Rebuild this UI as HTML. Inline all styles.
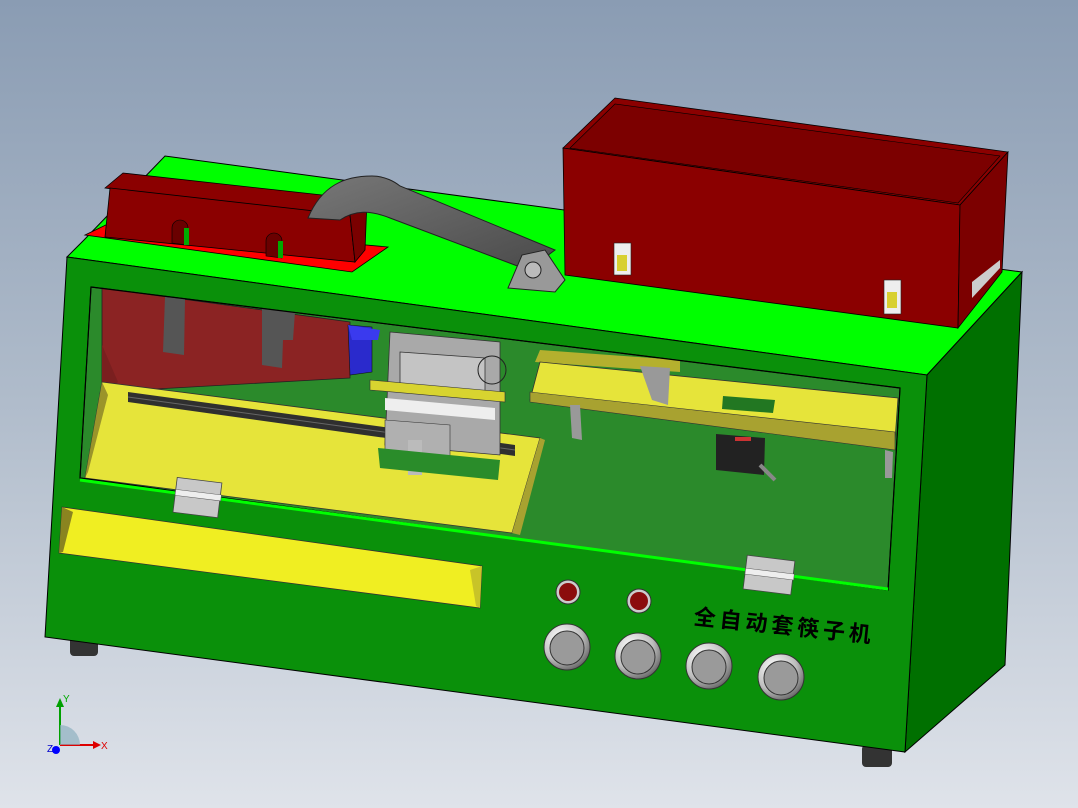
<!DOCTYPE html>
<html><head><meta charset="utf-8"><style>
html,body{margin:0;padding:0;width:1078px;height:808px;overflow:hidden}
svg{display:block}
</style></head><body>
<svg width="1078" height="808" viewBox="0 0 1078 808" xmlns="http://www.w3.org/2000/svg">
<defs>
<linearGradient id="bg" x1="0" y1="0" x2="0" y2="1">
<stop offset="0" stop-color="#8a9cb3"/><stop offset="0.5" stop-color="#b0bccb"/><stop offset="1" stop-color="#dfe3ea"/>
</linearGradient>
<radialGradient id="btn" cx="0.35" cy="0.3" r="0.8">
<stop offset="0" stop-color="#ffffff"/><stop offset="0.6" stop-color="#bdbdbd"/><stop offset="1" stop-color="#555"/>
</radialGradient>
<linearGradient id="arm" x1="0" y1="0" x2="1" y2="1">
<stop offset="0" stop-color="#777"/><stop offset="1" stop-color="#4a4a4a"/>
</linearGradient>
</defs>
<rect width="1078" height="808" fill="url(#bg)"/>

<!-- feet -->
<rect x="70" y="636" width="28" height="20" rx="4" fill="#333"/>
<rect x="862" y="745" width="30" height="22" rx="4" fill="#333"/>

<!-- top face -->
<polygon points="67,257 84,240 165,156 1022,272 927,375" fill="#00ff00" stroke="#000" stroke-width="1"/>
<!-- right side face -->
<polygon points="927,375 1022,272 1005,665 905,752" fill="#007000" stroke="#000" stroke-width="1"/>
<!-- front face -->
<polygon points="67,257 927,375 905,752 45,637" fill="#0a900a" stroke="#000" stroke-width="1"/>

<!-- window interior -->
<polygon points="91,287 900,388 888,590 80,478" fill="#2b8a2b" stroke="#000" stroke-width="1"/>
<!-- red back blocks -->
<polygon points="102,288 350,322 350,378 102,392" fill="#8b2323" stroke="#222" stroke-width="0.8"/>
<polygon points="165,297 185,299 184,355 163,352" fill="#555"/>
<polygon points="262,308 295,312 293,340 283,340 282,368 262,365" fill="#555"/>
<polygon points="102,345 118,382 102,395" fill="#7a1f1f"/>
<!-- yellow floor left -->
<polygon points="102,382 540,438 512,533 85,478" fill="#e6e43a" stroke="#333" stroke-width="0.8"/>
<polygon points="102,382 108,395 88,472 85,478" fill="#9a942a"/>
<polygon points="540,438 545,440 520,535 512,533" fill="#a8a230"/>
<!-- rail -->
<polygon points="128,392 515,445 515,456 128,402" fill="#2f2f2f"/>
<line x1="128" y1="397" x2="515" y2="450" stroke="#666" stroke-width="1"/>
<!-- right shelf -->
<polygon points="540,350 680,360 680,372 535,362" fill="#b4b02e"/>
<polygon points="540,362 898,398 895,440 530,400" fill="#e6e43a" stroke="#333" stroke-width="0.8"/>
<polygon points="530,392 895,432 895,450 530,402" fill="#a8a230" stroke="#333" stroke-width="0.6"/>
<polygon points="570,405 580,405 582,440 572,438" fill="#999"/>
<polygon points="885,450 893,452 892,478 885,478" fill="#999"/>
<polygon points="640,366 670,368 668,405 652,400" fill="#999"/>
<polygon points="723,396 775,400 773,413 722,409" fill="#227722"/>
<!-- sensor -->
<polygon points="716,434 765,438 764,475 716,470" fill="#222"/>
<line x1="760" y1="465" x2="775" y2="480" stroke="#888" stroke-width="4"/>
<rect x="735" y="437" width="16" height="4" fill="#c33"/>
<!-- mechanism -->
<polygon points="348,325 372,327 372,372 350,375" fill="#2a2acc" stroke="#111" stroke-width="0.6"/>
<polygon points="348,325 380,330 378,340 352,340" fill="#3a3aee"/>
<polygon points="390,332 500,342 500,455 385,445" fill="#a9a9a9" stroke="#333" stroke-width="0.8"/>
<polygon points="400,352 485,358 485,395 400,388" fill="#c4c4c4" stroke="#333" stroke-width="0.8"/>
<polygon points="370,380 505,392 505,402 370,390" fill="#d8d430" stroke="#333" stroke-width="0.6"/>
<polygon points="385,398 495,408 495,420 385,410" fill="#eee"/>
<polygon points="385,420 450,425 450,465 385,460" fill="#b0b0b0" stroke="#333" stroke-width="0.6"/>
<rect x="408" y="440" width="14" height="35" fill="#bbb"/>
<circle cx="492" cy="370" r="14" fill="none" stroke="#222" stroke-width="1"/>
<polygon points="378,448 500,460 498,480 380,468" fill="#2a8c2a"/>

<!-- window frame lines -->
<polygon points="91,287 900,388 888,590 80,478" fill="none" stroke="#000" stroke-width="1.2"/>
<line x1="80" y1="480" x2="888" y2="589" stroke="#00ff00" stroke-width="3"/>

<!-- hinges -->
<g>
<rect x="175" y="480" width="45" height="35" fill="#c8c8c8" stroke="#444" stroke-width="0.8" transform="rotate(7 197 497)"/>
<rect x="175" y="492" width="46" height="6" fill="#eee" stroke="#555" stroke-width="0.5" transform="rotate(7 197 497)"/>
<rect x="745" y="558" width="48" height="34" fill="#c8c8c8" stroke="#444" stroke-width="0.8" transform="rotate(7 769 575)"/>
<rect x="745" y="571" width="49" height="6" fill="#eee" stroke="#555" stroke-width="0.5" transform="rotate(7 769 575)"/>
</g>

<!-- yellow slot -->
<polygon points="62,507 482,566 480,608 59,553" fill="#f0ee22" stroke="#333" stroke-width="0.8"/>
<polygon points="62,507 73,512 63,552 59,553" fill="#8a8420"/>
<polygon points="470,570 482,566 480,608 476,606" fill="#c8c428"/>

<!-- lights -->
<circle cx="568" cy="592" r="12" fill="#ccc" stroke="#333" stroke-width="1"/>
<circle cx="568" cy="592" r="9" fill="#8b0c0c"/>
<circle cx="639" cy="601" r="12" fill="#ccc" stroke="#333" stroke-width="1"/>
<circle cx="639" cy="601" r="9" fill="#8b0c0c"/>
<!-- buttons -->
<g stroke="#333" stroke-width="1">
<circle cx="567" cy="647" r="23" fill="url(#btn)"/><circle cx="567" cy="648" r="17" fill="#9a9a9a"/>
<circle cx="638" cy="656" r="23" fill="url(#btn)"/><circle cx="638" cy="657" r="17" fill="#9a9a9a"/>
<circle cx="709" cy="666" r="23" fill="url(#btn)"/><circle cx="709" cy="667" r="17" fill="#9a9a9a"/>
<circle cx="781" cy="677" r="23" fill="url(#btn)"/><circle cx="781" cy="678" r="17" fill="#9a9a9a"/>
</g>
<text x="693" y="624" font-family="'Liberation Sans','Noto Sans CJK SC',sans-serif" font-size="22" font-weight="bold" fill="#000" letter-spacing="4" transform="rotate(6 693 624)">全自动套筷子机</text>

<!-- left red tray -->
<polygon points="85,235 112,222 388,247 352,272" fill="#ff0000" stroke="#000" stroke-width="0.8"/>
<polygon points="105,188 123,173 367,200 350,223" fill="#8b0000" stroke="#000" stroke-width="0.8"/>
<polygon points="110,188 350,215 355,262 105,237" fill="#8b0000" stroke="#000" stroke-width="0.8"/>
<polygon points="350,215 367,200 365,250 355,262" fill="#7a0000" stroke="#000" stroke-width="0.8"/>
<path d="M172,243 v-15 a8,8 0 0 1 16,0 v17 z" fill="#6a0000" stroke="#000" stroke-width="0.6"/>
<rect x="184" y="228" width="5" height="17" fill="#0a0"/>
<path d="M266,256 v-15 a8,8 0 0 1 16,0 v17 z" fill="#6a0000" stroke="#000" stroke-width="0.6"/>
<rect x="278" y="241" width="5" height="17" fill="#0a0"/>

<!-- arm -->
<path d="M308,218 C322,185 345,176 372,176 C385,176 395,182 400,186 L555,250 L528,270 L390,218 C370,210 355,210 340,220 Z" fill="url(#arm)" stroke="#222" stroke-width="1"/>
<polygon points="508,288 522,255 545,250 565,280 555,292" fill="#999" stroke="#222" stroke-width="1"/>
<circle cx="533" cy="270" r="8" fill="#bbb" stroke="#222"/>

<!-- right red box -->
<polygon points="563,148 615,98 1008,152 960,205" fill="#8b0000" stroke="#000" stroke-width="0.8"/>
<polygon points="570,148 615,104 1000,156 958,203" fill="#7c0000" stroke="#000" stroke-width="0.6"/>
<polygon points="563,148 960,205 958,328 565,275" fill="#8b0000" stroke="#000" stroke-width="0.8"/>
<polygon points="960,205 1008,152 1002,272 958,328" fill="#7c0000" stroke="#000" stroke-width="0.8"/>
<polygon points="972,282 1000,260 1000,268 972,298" fill="#ccc"/>
<rect x="614" y="243" width="17" height="32" fill="#eee" stroke="#222" stroke-width="0.6"/>
<rect x="617" y="255" width="10" height="16" fill="#d8d030"/>
<rect x="884" y="280" width="17" height="34" fill="#eee" stroke="#222" stroke-width="0.6"/>
<rect x="887" y="292" width="10" height="16" fill="#d8d030"/>

<!-- axis triad -->
<g stroke-width="2">
<line x1="60" y1="745" x2="60" y2="705" stroke="#00a000"/>
<polygon points="56,707 64,707 60,698" fill="#00a000"/>
<line x1="60" y1="745" x2="95" y2="745" stroke="#d00"/>
<polygon points="93,741 93,749 101,745" fill="#d00"/>
<path d="M60,745 L60,725 A20,20 0 0 1 80,745 Z" fill="#8fb0c0" stroke="none" opacity="0.7"/>
<circle cx="56" cy="750" r="4" fill="#00f" stroke="none"/>
</g>
<text x="63" y="702" font-family="Liberation Sans,sans-serif" font-size="10" fill="#0a0">Y</text>
<text x="101" y="749" font-family="Liberation Sans,sans-serif" font-size="10" fill="#d00">X</text>
<text x="47" y="752" font-family="Liberation Sans,sans-serif" font-size="10" fill="#00c">Z</text>
</svg>
</body></html>
